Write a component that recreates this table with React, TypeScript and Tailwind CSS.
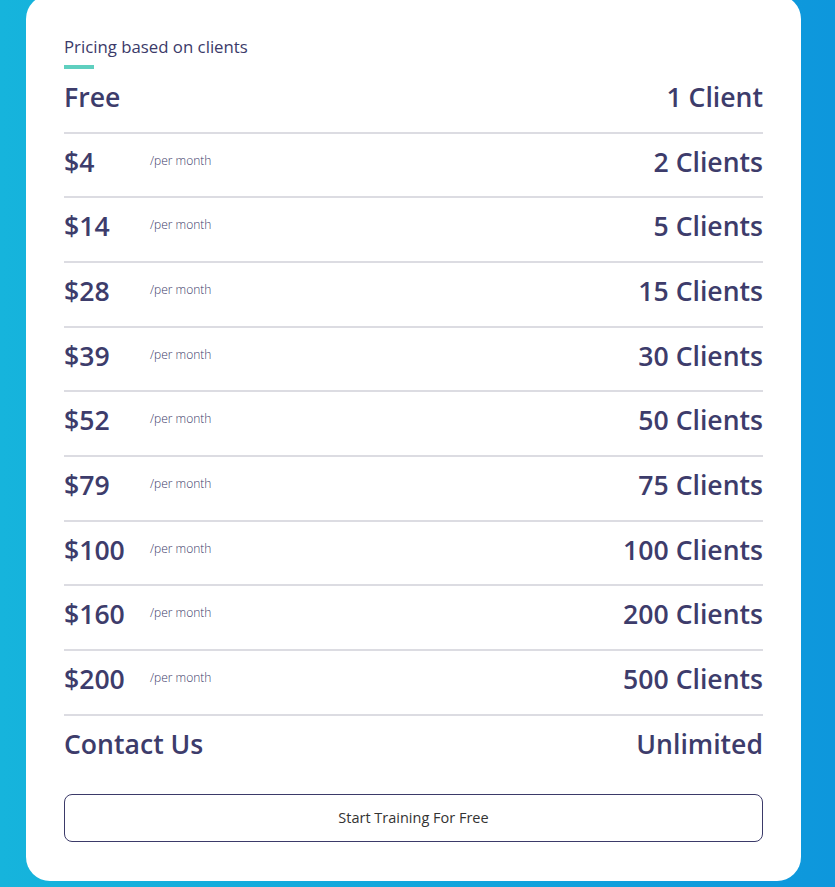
import React from 'react';

const plans = [
  { price: 'Free', clients: '1 Client', monthly: false },
  { price: '$4', clients: '2 Clients', monthly: true },
  { price: '$14', clients: '5 Clients', monthly: true },
  { price: '$28', clients: '15 Clients', monthly: true },
  { price: '$39', clients: '30 Clients', monthly: true },
  { price: '$52', clients: '50 Clients', monthly: true },
  { price: '$79', clients: '75 Clients', monthly: true },
  { price: '$100', clients: '100 Clients', monthly: true },
  { price: '$160', clients: '200 Clients', monthly: true },
  { price: '$200', clients: '500 Clients', monthly: true },
  { price: 'Contact Us', clients: 'Unlimited', monthly: false },
];

function App() {
  return (
    <div className="min-h-[887px] w-full overflow-hidden bg-gradient-to-r from-[#16b4dc] to-[#0e97dc] font-['Open_Sans',sans-serif]">
      <div className="ml-[26px] mt-[-5px] w-[775px] rounded-[24px] bg-white px-[38px] pt-[41px] pb-[39px]">
        <h2 className="text-[16.8px] leading-[22px] text-[#3b3a69]">Pricing based on clients</h2>
        <div className="mt-[7px] h-[4px] w-[30px] bg-[#5fcfbf]" />
        <div>
          {plans.map((p, i) => (
            <div
              key={i}
              className={
                'flex h-[64.67px] items-start justify-between pt-[9px] ' +
                (i < plans.length - 1 ? 'border-b-2 border-[#dcdce2]' : '')
              }
            >
              <div className="flex items-center">
                <span className={'text-[26.6px] font-semibold leading-[38px] text-[#3d3c6b] ' + (p.monthly ? 'w-[86px]' : '')}>
                  {p.price}
                </span>
                {p.monthly && (
                  <span className="text-[12px] font-light leading-[16px] text-[#3b3a69] -mt-[2px]">/per month</span>
                )}
              </div>
              <span className="text-[26.6px] font-semibold leading-[38px] text-[#3d3c6b]">{p.clients}</span>
            </div>
          ))}
        </div>
        <button className="mt-[14px] h-[48px] w-full rounded-[8px] border border-[#3b3a69] bg-white text-[14.5px] text-[#333333]">
          Start Training For Free
        </button>
      </div>
    </div>
  );
}

export default App;
